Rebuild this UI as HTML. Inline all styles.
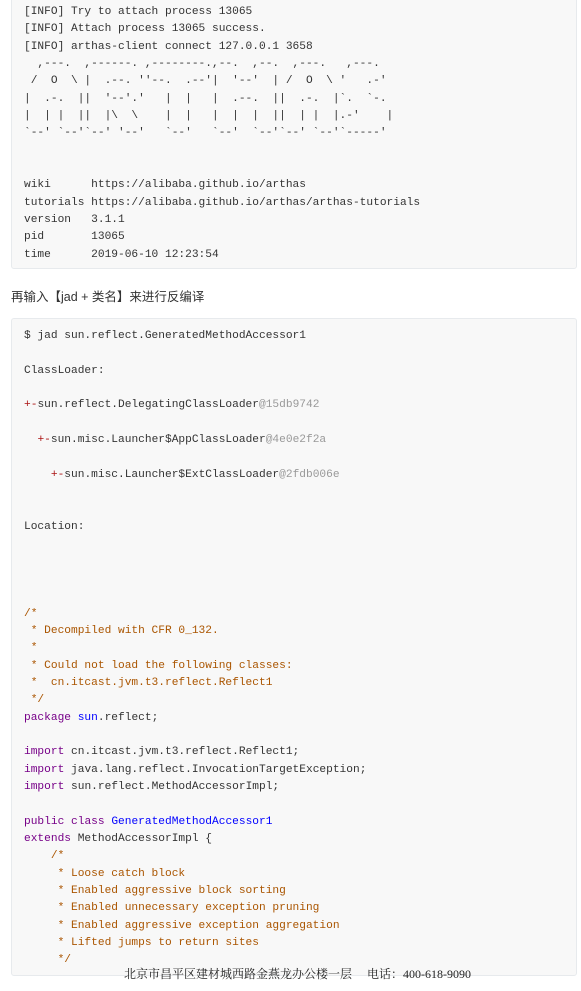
<!DOCTYPE html>
<html><head><meta charset="utf-8"><style>
body{margin:0;background:#fff;width:581px;height:991px;overflow:hidden;position:relative;font-family:"Liberation Sans","Noto Sans CJK SC",sans-serif}
.box{position:absolute;left:11px;width:566px;background:#f8f8f8;border:1px solid #e7eaed;border-radius:3px;box-sizing:border-box}
pre{margin:0;position:absolute;left:12px;font-family:"Liberation Mono",monospace;font-size:11.2px;line-height:17.35px;color:#333;white-space:pre}
.c{color:#aa5500}.k{color:#770088}.d{color:#0000ff}.r{color:#a11}.g{color:#999}
.p{position:absolute;left:11px;top:286px;font-size:12.5px;color:#333}
.f{position:absolute;top:965px;left:124px;font-family:"Liberation Serif","Noto Serif CJK SC",serif;font-size:12px;color:#222}
</style></head><body>
<div class="box" style="top:-4px;height:273px"><pre style="top:7px">[INFO] Try to attach process 13065
[INFO] Attach process 13065 success.
[INFO] arthas-client connect 127.0.0.1 3658
  ,---.  ,------. ,--------.,--.  ,--.  ,---.   ,---.
 /  O  \ |  .--. ''--.  .--'|  '--'  | /  O  \ '   .-'
|  .-.  ||  '--'.'   |  |   |  .--.  ||  .-.  |`.  `-.
|  | |  ||  |\  \    |  |   |  |  |  ||  | |  |.-'    |
`--' `--'`--' '--'   `--'   `--'  `--'`--' `--'`-----'


wiki      https://alibaba.github.io/arthas
tutorials https://alibaba.github.io/arthas/arthas-tutorials
version   3.1.1
pid       13065
time      2019-06-10 12:23:54</pre></div>
<div class="p">再输入【jad + 类名】来进行反编译</div>
<div class="box" style="top:318px;height:658px"><pre style="top:9px">$ jad sun.reflect.GeneratedMethodAccessor1

ClassLoader:

<span class="r">+-</span>sun.reflect.DelegatingClassLoader<span class="g">@15db9742</span>

  <span class="r">+-</span>sun.misc.Launcher$AppClassLoader<span class="g">@4e0e2f2a</span>

    <span class="r">+-</span>sun.misc.Launcher$ExtClassLoader<span class="g">@2fdb006e</span>


Location:




<span class="c">/*
 * Decompiled with CFR 0_132.
 *
 * Could not load the following classes:
 *  cn.itcast.jvm.t3.reflect.Reflect1
 */</span>
<span class="k">package</span> <span class="d">sun</span>.reflect;

<span class="k">import</span> cn.itcast.jvm.t3.reflect.Reflect1;
<span class="k">import</span> java.lang.reflect.InvocationTargetException;
<span class="k">import</span> sun.reflect.MethodAccessorImpl;

<span class="k">public</span> <span class="k">class</span> <span class="d">GeneratedMethodAccessor1</span>
<span class="k">extends</span> MethodAccessorImpl {
    <span class="c">/*
     * Loose catch block
     * Enabled aggressive block sorting
     * Enabled unnecessary exception pruning
     * Enabled aggressive exception aggregation
     * Lifted jumps to return sites
     */</span></pre></div>
<div class="f">北京市昌平区建材城西路金燕龙办公楼一层&nbsp;&nbsp;&nbsp;&nbsp; 电话：400-618-9090</div>
</body></html>
